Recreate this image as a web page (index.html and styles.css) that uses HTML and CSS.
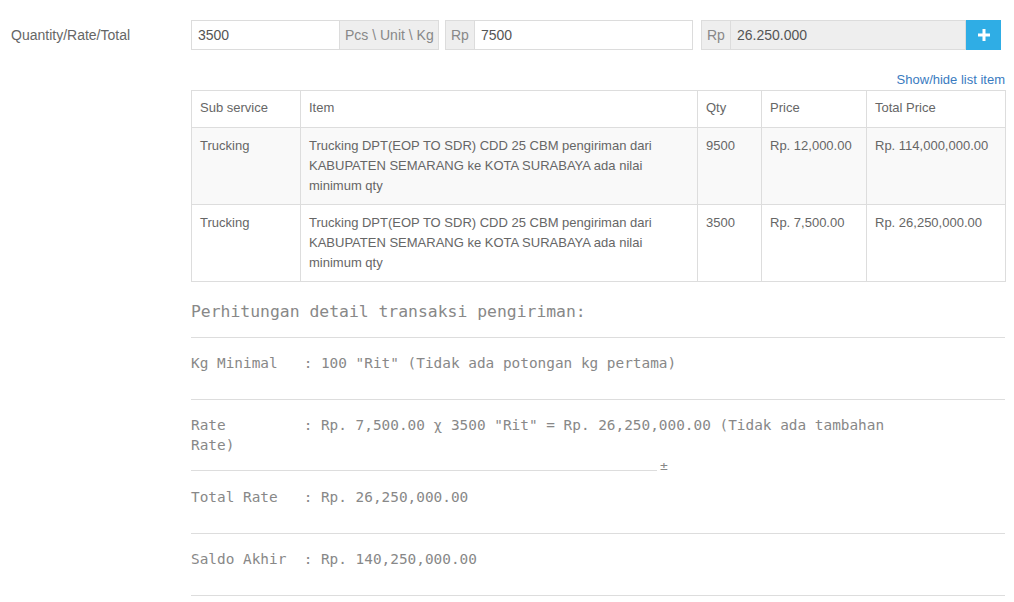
FILE: index.html
```html
<!DOCTYPE html>
<html>
<head>
<meta charset="utf-8">
<link rel="stylesheet" href="styles.css">
</head>
<body>
<div class="page">
  <div class="label-col">Quantity/Rate/Total</div>
  <div class="main-col">
    <div class="inputs">
      <div class="group g1">
        <div class="field">3500</div>
        <div class="addon addon-right">Pcs \ Unit \ Kg</div>
      </div>
      <div class="group g2">
        <div class="addon addon-left">Rp</div>
        <div class="field">7500</div>
      </div>
      <div class="group g3">
        <div class="addon addon-left">Rp</div>
        <div class="field readonly">26.250.000</div>
        <button class="btn-add"><svg width="12" height="12" viewBox="0 0 12 12"><rect x="4.5" y="0" width="3" height="12" fill="#fff"/><rect x="0" y="4.5" width="12" height="3" fill="#fff"/></svg></button>
      </div>
    </div>
    <div class="toggle"><a class="toggle-link">Show/hide list item</a></div>
    <table class="items">
      <colgroup>
        <col class="c1"><col class="c2"><col class="c3"><col class="c4"><col class="c5">
      </colgroup>
      <thead>
        <tr><th>Sub service</th><th>Item</th><th>Qty</th><th>Price</th><th>Total Price</th></tr>
      </thead>
      <tbody>
        <tr class="striped">
          <td>Trucking</td>
          <td>Trucking DPT(EOP TO SDR) CDD 25 CBM pengiriman dari KABUPATEN SEMARANG ke KOTA SURABAYA ada nilai minimum qty</td>
          <td>9500</td>
          <td>Rp. 12,000.00</td>
          <td>Rp. 114,000,000.00</td>
        </tr>
        <tr>
          <td>Trucking</td>
          <td>Trucking DPT(EOP TO SDR) CDD 25 CBM pengiriman dari KABUPATEN SEMARANG ke KOTA SURABAYA ada nilai minimum qty</td>
          <td>3500</td>
          <td>Rp. 7,500.00</td>
          <td>Rp. 26,250,000.00</td>
        </tr>
      </tbody>
    </table>
    <div class="calc">
      <div class="calc-title">Perhitungan detail transaksi pengiriman:</div>
      <div class="rule r1"></div>
      <pre class="calc-row first">Kg Minimal   : 100 "Rit" (Tidak ada potongan kg pertama)</pre>
      <div class="rule r2"></div>
      <pre class="calc-row first">Rate         : Rp. 7,500.00 χ 3500 "Rit" = Rp. 26,250,000.00 (Tidak ada tambahan
Rate)</pre>
      <div class="sum-line"><span class="sum-bar"></span><span class="sum-sign">±</span></div>
      <pre class="calc-row total">Total Rate   : Rp. 26,250,000.00</pre>
      <div class="rule r2"></div>
      <pre class="calc-row first">Saldo Akhir  : Rp. 140,250,000.00</pre>
      <div class="rule r2"></div>
    </div>
  </div>
</div>
</body>
</html>
```

FILE: styles.css
```css
html, body {
  margin: 0;
  padding: 0;
  background: #fff;
}
body {
  font-family: "Liberation Sans", Arial, sans-serif;
  font-size: 14px;
  color: #666;
}
.page {
  display: flex;
  padding-top: 20px;
}
.label-col {
  width: 180px;
  padding-left: 11px;
  line-height: 30px;
  color: #666;
  flex: none;
}
.main-col {
  width: 814px;
  flex: none;
}
.inputs {
  display: flex;
  height: 30px;
}
.group {
  display: flex;
  height: 30px;
  box-sizing: border-box;
}
.g1 { width: 248px; }
.g2 { width: 248px; margin-left: 6px; }
.g3 { width: 300px; margin-left: 8px; }
.field {
  flex: 1;
  box-sizing: border-box;
  height: 30px;
  border: 1px solid #dcdcdc;
  padding: 0 6px;
  line-height: 28px;
  color: #555;
  background: #fff;
  min-width: 0;
}
.field.readonly {
  background: #eee;
}
.addon {
  box-sizing: border-box;
  height: 30px;
  border: 1px solid #dcdcdc;
  background: #eee;
  color: #888;
  padding: 0 5px;
  line-height: 28px;
  white-space: nowrap;
  flex: none;
}
.addon-right { border-left: 0; width: 99px; }
.addon-left { border-right: 0; width: 29px; }
.btn-add {
  width: 35px;
  height: 30px;
  border: 0;
  padding: 0;
  background: #2fade5;
  display: flex;
  align-items: center;
  justify-content: center;
  flex: none;
}
.toggle {
  margin-top: 21px;
  line-height: 16px;
  height: 16px;
  text-align: right;
  margin-bottom: 3px;
}
.toggle-link {
  font-size: 13px;
  color: #3a7bbf;
  text-decoration: none;
}
.items {
  width: 814px;
  border-collapse: collapse;
  table-layout: fixed;
  font-size: 13px;
  color: #666;
}
.c1 { width: 109px; }
.c2 { width: 397px; }
.c3 { width: 64px; }
.c4 { width: 105px; }
.c5 { width: 139px; }
.items th, .items td {
  border: 1px solid #ddd;
  padding: 8px;
  line-height: 20px;
  text-align: left;
  vertical-align: top;
  font-weight: normal;
}
.items th { padding-top: 7px; padding-bottom: 9px; }
.items td { height: 60px; box-sizing: content-box; }
.items tr.striped td { background: #f9f9f9; }
.calc {
  font-family: "DejaVu Sans Mono", "Liberation Mono", monospace;
  color: #888;
}
.calc-title {
  margin-top: 20px;
  font-size: 16.4px;
  line-height: 20px;
}
.rule {
  height: 0;
  border-top: 1px solid #ddd;
}
.r1 { margin-top: 15px; }
.r2 { margin-top: 26px; }
.calc-row {
  margin: 15px 0 0 0;
  font-family: inherit;
  font-size: 14.4px;
  line-height: 20px;
  white-space: pre;
}
.calc-row.total { margin-top: 12px; }
.sum-line {
  display: flex;
  align-items: flex-start;
  height: 20px;
}
.sum-bar {
  width: 466px;
  height: 0;
  border-top: 1px solid #ddd;
  margin-top: 15px;
}
.sum-sign {
  font-size: 13px;
  line-height: 20px;
  margin-left: 3px;
  margin-top: 1px;
  color: #888;
}
```
